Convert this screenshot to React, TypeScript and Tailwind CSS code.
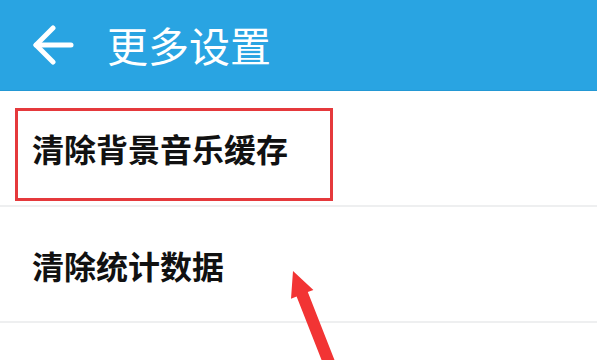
import React from "react";

export default function App() {
  return (
    <div
      className="relative w-[597px] h-[360px] overflow-hidden bg-white"
      style={{ fontFamily: '"Noto Sans CJK SC", "Noto Sans", sans-serif' }}
    >
      <div className="h-[91px] bg-[#29a4e2] border-b border-[#2398d4] flex items-center">
        <div className="ml-[31px] w-[44px] h-[40px] flex items-center justify-center">
          <svg width="44" height="40" viewBox="0 0 44 40" fill="none">
            <path d="M5 20 H40" stroke="white" strokeWidth="5" strokeLinecap="round" />
            <path d="M22 3 L5 20 L22 37" stroke="white" strokeWidth="5" strokeLinecap="round" strokeLinejoin="round" />
          </svg>
        </div>
        <div className="ml-[32px] text-white text-[41px] leading-none pb-[2px]">更多设置</div>
      </div>
      <div className="h-[116px] flex items-center border-b-2 border-[#eeeff0] pl-[32px]">
        <span className="text-[32px] font-bold text-[#111] leading-none">清除背景音乐缓存</span>
      </div>
      <div className="h-[116px] flex items-center border-b-2 border-[#eeeff0] pl-[32px]">
        <span className="text-[32px] font-bold text-[#111] leading-none pt-[2px]">清除统计数据</span>
      </div>
      <div className="absolute left-[15px] top-[108px] w-[318px] h-[93px] border-[3px] border-[#e5393c]" />
      <svg className="absolute left-0 top-0" width="597" height="360" viewBox="0 0 597 360">
        <polygon
          points="293,271 313.4,289.9 307.8,292.1 335.6,362.8 324.4,367.2 296.6,296.5 291,298.7"
          fill="#f23434"
        />
      </svg>
    </div>
  );
}
